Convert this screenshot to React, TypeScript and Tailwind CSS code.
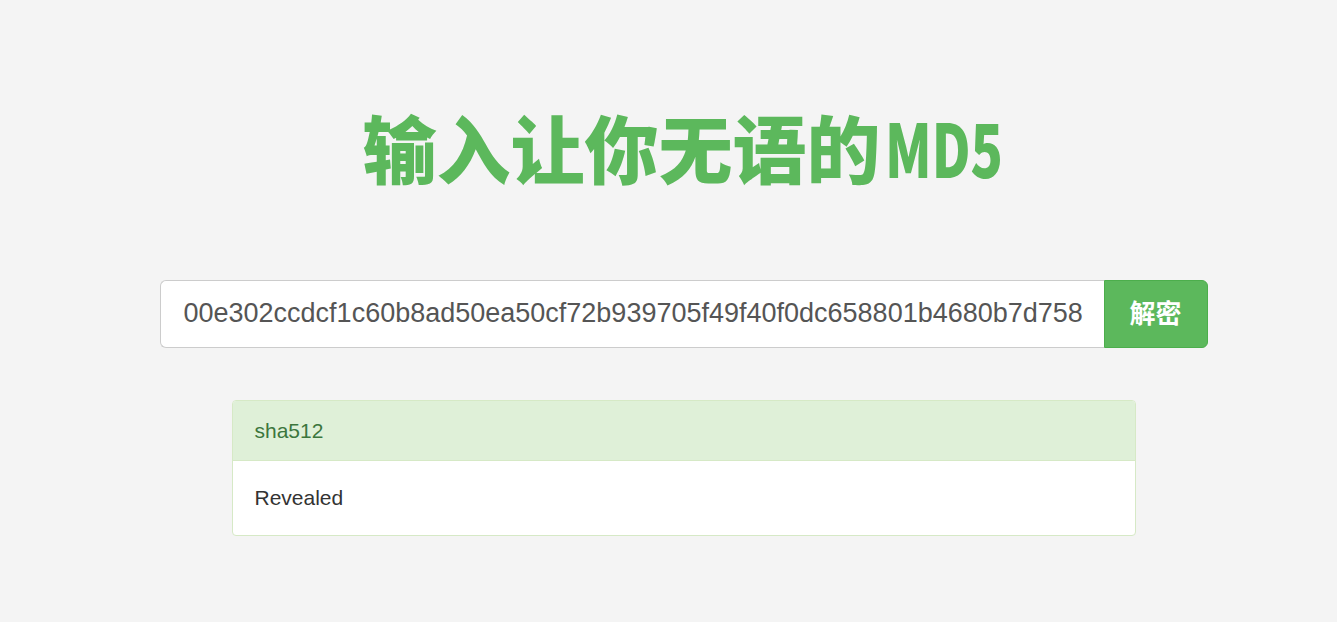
export default function App() {
    const hash = "00e302ccdcf1c60b8ad50ea50cf72b939705f49f40f0dc658801b4680b7d758"

    return (
        <div className="min-h-[622px] w-full bg-[#f4f4f4] pl-[30px] flex flex-col items-center font-['Liberation_Sans','Noto_Sans_CJK_SC',sans-serif]">
            {/* 标题 */}
            <h1 className="mt-[101px] h-[90px] flex items-center text-[74px] leading-none font-black text-[#5cb85c] font-['Noto_Sans_CJK_SC',sans-serif]">
                <span>输入让你无语的</span>
                <span className="inline-block origin-left scale-x-[0.72] mr-[-44px] ml-[4px]">MD5</span>
            </h1>

            <div className="mt-[89px] w-[1048px] flex h-[68px]">
                <input
                    readOnly
                    value={hash}
                    className="flex-1 min-w-0 bg-white border border-[#ccc] border-r-0 rounded-l-[6px] pl-[23px] pr-3 pb-[2px] text-[27px] text-[#555] outline-none font-['Liberation_Sans',sans-serif]"
                />
                <button className="w-[104px] bg-[#5cb85c] border border-[#4cae4c] rounded-r-[6px] pb-[6px] text-white text-[26px] font-bold font-['Noto_Sans_CJK_SC',sans-serif]">
                    解密
                </button>
            </div>

            <div className="mt-[52px] w-[904px] bg-white border border-[#d6e9c6] rounded-[4px] overflow-hidden">
                <div className="h-[60px] bg-[#dff0d8] border-b border-[#d6e9c6] px-[22px] flex items-center text-[21px] text-[#3c763d]">
                    sha512
                </div>
                <div className="h-[74px] px-[22px] flex items-center text-[21px] text-[#333]">
                    Revealed
                </div>
            </div>
        </div>
    )
}
